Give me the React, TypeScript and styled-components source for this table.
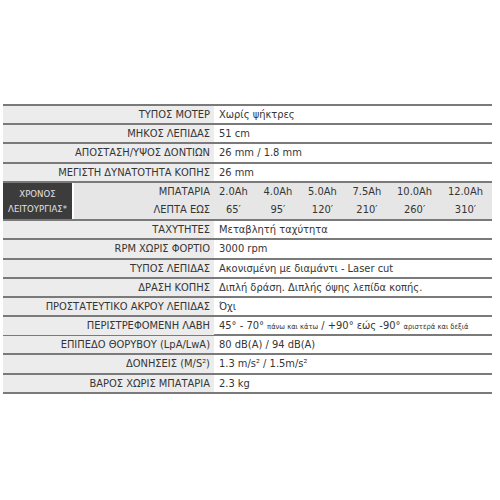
import React from "react";
import styled, { createGlobalStyle } from "styled-components";

const Global = createGlobalStyle`
  html, body { margin: 0; padding: 0; background: #fff; }
  body {
    font-family: "Liberation Sans Narrow", "DejaVu Sans Condensed", "DejaVu Sans", sans-serif;
  }
`;

const Page = styled.div`
  width: 500px;
  height: 500px;
  box-sizing: border-box;
  padding: 104px 8px 0 3px;
`;

const Table = styled.div`
  width: 489px;
  border-top: 2px solid #7a7a7a;
  display: flex;
  flex-direction: column;
  color: #353535;
  font-size: 11px;
`;

const Row = styled.div`
  display: grid;
  grid-template-columns: 211px 1fr;
  height: 19.2px;
  box-sizing: border-box;
  border-bottom: 2px solid #7a7a7a;
`;

const Label = styled.div`
  background: #ececec;
  text-align: right;
  padding-right: 4px;
  line-height: 17px;
  white-space: nowrap;
`;

const Value = styled.div`
  padding-left: 5px;
  line-height: 17px;
  white-space: nowrap;
`;

const Small = styled.span`
  font-size: 7.5px;
`;

const Battery = styled.div`
  display: grid;
  grid-template-columns: 71px 140px 1fr;
  height: 38.4px;
  box-sizing: border-box;
  border-bottom: 2px solid #7a7a7a;
  background: #e6e6e6;
`;

const TimeBadge = styled.div`
  background: #3c3c3c;
  color: #e2e2e2;
  font-size: 9.5px;
  line-height: 15px;
  border-right: 2px solid #fff;
  display: flex;
  flex-direction: column;
  align-items: center;
  justify-content: center;
`;

const BatLabels = styled.div`
  display: flex;
  flex-direction: column;
  align-items: flex-end;
  padding-right: 4px;
  line-height: 18px;
`;

const BatValues = styled.div`
  display: flex;
  justify-content: space-between;
  padding: 0 9px 0 5px;
`;

const BatCol = styled.div`
  display: flex;
  flex-direction: column;
  align-items: center;
  line-height: 18px;
`;

const rowsTop: [string, React.ReactNode][] = [
  ["ΤΥΠΟΣ ΜΟΤΕΡ", "Χωρίς ψήκτρες"],
  ["ΜΗΚΟΣ ΛΕΠΙΔΑΣ", "51 cm"],
  ["ΑΠΟΣΤΑΣΗ/ΥΨΟΣ ΔΟΝΤΙΩΝ", "26 mm / 1.8 mm"],
  ["ΜΕΓΙΣΤΗ ΔΥΝΑΤΟΤΗΤΑ ΚΟΠΗΣ", "26 mm"],
];

const rowsBottom: [string, React.ReactNode][] = [
  ["ΤΑΧΥΤΗΤΕΣ", "Μεταβλητή ταχύτητα"],
  ["RPM ΧΩΡΙΣ ΦΟΡΤΙΟ", "3000 rpm"],
  ["ΤΥΠΟΣ ΛΕΠΙΔΑΣ", "Ακονισμένη με διαμάντι - Laser cut"],
  ["ΔΡΑΣΗ ΚΟΠΗΣ", "Διπλή δράση. Διπλής όψης λεπίδα κοπής."],
  ["ΠΡΟΣΤΑΤΕΥΤΙΚΟ ΑΚΡΟΥ ΛΕΠΙΔΑΣ", "Όχι"],
  [
    "ΠΕΡΙΣΤΡΕΦΟΜΕΝΗ ΛΑΒΗ",
    <>
      45° - 70° <Small>πάνω και κάτω</Small> / +90° εώς -90° <Small>αριστερά και δεξιά</Small>
    </>,
  ],
  ["ΕΠΙΠΕΔΟ ΘΟΡΥΒΟΥ (LpA/LwA)", "80 dB(A) / 94 dB(A)"],
  ["ΔΟΝΗΣΕΙΣ (M/S²)", "1.3 m/s² / 1.5m/s²"],
  ["ΒΑΡΟΣ ΧΩΡΙΣ ΜΠΑΤΑΡΙΑ", "2.3 kg"],
];

const battery: [string, string][] = [
  ["2.0Ah", "65′"],
  ["4.0Ah", "95′"],
  ["5.0Ah", "120′"],
  ["7.5Ah", "210′"],
  ["10.0Ah", "260′"],
  ["12.0Ah", "310′"],
];

export default function App() {
  return (
    <Page>
      <Global />
      <Table>
        {rowsTop.map(([l, v]) => (
          <Row key={l}>
            <Label>{l}</Label>
            <Value>{v}</Value>
          </Row>
        ))}
        <Battery>
          <TimeBadge>
            <span>ΧΡΟΝΟΣ</span>
            <span>ΛΕΙΤΟΥΡΓΙΑΣ*</span>
          </TimeBadge>
          <BatLabels>
            <span>ΜΠΑΤΑΡΙΑ</span>
            <span>ΛΕΠΤΑ ΕΩΣ</span>
          </BatLabels>
          <BatValues>
            {battery.map(([a, m]) => (
              <BatCol key={a}>
                <span>{a}</span>
                <span>{m}</span>
              </BatCol>
            ))}
          </BatValues>
        </Battery>
        {rowsBottom.map(([l, v]) => (
          <Row key={l}>
            <Label>{l}</Label>
            <Value>{v}</Value>
          </Row>
        ))}
      </Table>
    </Page>
  );
}
